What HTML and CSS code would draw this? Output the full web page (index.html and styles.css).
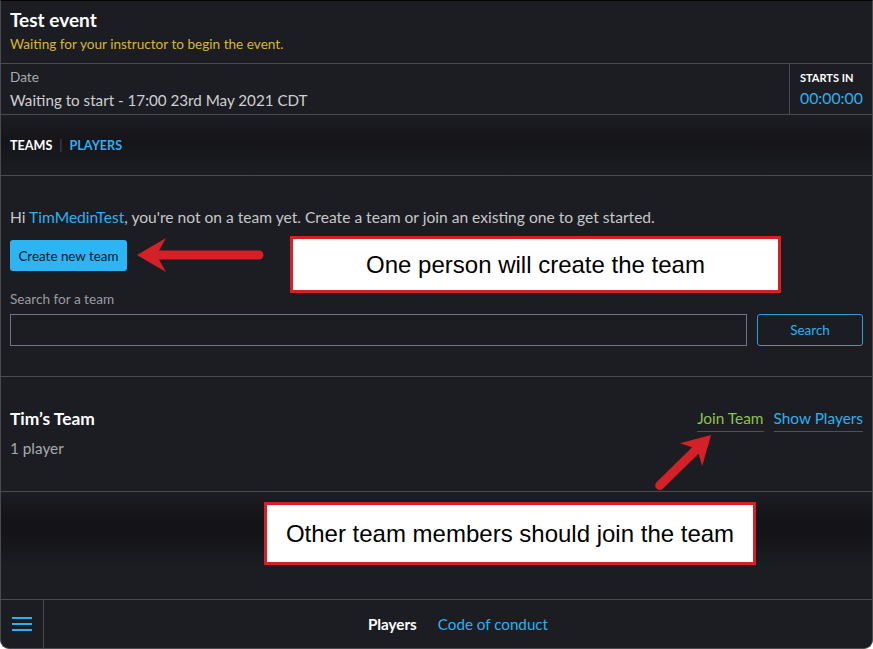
FILE: index.html
```html
<!DOCTYPE html>
<html>
<head>
<meta charset="utf-8">
<link rel="stylesheet" href="styles.css">
</head>
<body>
<div class="app">
  <header class="head">
    <h1 class="title">Test event</h1>
    <p class="status">Waiting for your instructor to begin the event.</p>
  </header>
  <section class="daterow">
    <div class="datecell">
      <div class="label">Date</div>
      <div class="dateval">Waiting to start - 17:00 23rd May 2021 CDT</div>
    </div>
    <div class="startcell">
      <div class="startlabel">STARTS IN</div>
      <div class="timer">00:00:00</div>
    </div>
  </section>
  <nav class="tabs">
    <span class="tab active">TEAMS</span>
    <span class="sep">|</span>
    <span class="tab link">PLAYERS</span>
  </nav>
  <section class="intro">
    <p class="hi">Hi <span class="blue">TimMedinTest</span>, you're not on a team yet. Create a team or join an existing one to get started.</p>
    <button class="create">Create new team</button>
    <label class="label search-label">Search for a team</label>
    <div class="search-row">
      <input class="search-input" type="text">
      <button class="search-btn">Search</button>
    </div>
  </section>
  <section class="team">
    <div class="team-info">
      <div class="team-name">Tim’s Team</div>
      <div class="team-count">1 player</div>
    </div>
    <div class="team-actions">
      <span class="action join">Join Team</span>
      <span class="action show">Show Players</span>
    </div>
  </section>
  <section class="filler"></section>
  <footer class="foot">
    <div class="menu">
      <svg width="20" height="16" viewBox="0 0 20 16"><rect x="0" y="1" width="20" height="2" fill="#2fb0ee"/><rect x="0" y="7" width="20" height="2" fill="#2fb0ee"/><rect x="0" y="13" width="20" height="2" fill="#2fb0ee"/></svg>
    </div>
    <div class="foot-nav">
      <span class="foot-cur">Players</span>
      <span class="foot-link">Code of conduct</span>
    </div>
  </footer>

  <div class="callout callout1">One person will create the team</div>
  <div class="callout callout2">Other team members should join the team</div>
  <svg class="arrows" width="873" height="649" viewBox="0 0 873 649">
    <g fill="#d42027">
      <path d="M137 255 L166 238 L159 250.5 L259 250.5 A4.5 4.5 0 0 1 259 259.5 L159 259.5 L166 272 Z"/>
      <g transform="translate(711 435) rotate(135.5)">
        <path d="M0 0 L28 -16 L22 -4.5 L72 -4.5 A4.5 4.5 0 0 1 72 4.5 L22 4.5 L28 16 Z"/>
      </g>
    </g>
  </svg>
</div>
</body>
</html>
```

FILE: styles.css
```css
html, body {
  margin: 0;
  padding: 0;
  background: #ffffff;
}
body {
  width: 873px;
  height: 649px;
  overflow: hidden;
  font-family: Lato, "Open Sans", sans-serif;
}
.app {
  position: relative;
  box-sizing: border-box;
  width: 873px;
  height: 649px;
  background: #1c1d22;
  border: 1px solid #4a4b51;
  border-top-color: #050505;
  border-radius: 0 0 9px 9px;
  display: flex;
  flex-direction: column;
  overflow: hidden;
  color: #d2d3d6;
}
.head {
  height: 63px;
  box-sizing: border-box;
  padding: 7px 9px 0;
  border-bottom: 1px solid #494a50;
}
.title {
  margin: 0;
  font-size: 19px;
  line-height: 24px;
  font-weight: 700;
  color: #ffffff;
}
.status {
  margin: 4px 0 0;
  font-size: 13.6px;
  line-height: 17px;
  color: #d8b532;
}
.daterow {
  display: flex;
  height: 51px;
  box-sizing: border-box;
  border-bottom: 1px solid #494a50;
}
.datecell {
  flex: 1;
  padding: 5px 9px 0;
}
.label {
  display: block;
  font-size: 13.6px;
  line-height: 17px;
  color: #a9aab0;
}
.dateval {
  margin-top: 5px;
  font-size: 15.2px;
  line-height: 19px;
  color: #cfd0d3;
}
.startcell {
  width: 83px;
  border-left: 1px solid #494a50;
  padding: 7px 0 0 10px;
  box-sizing: border-box;
}
.startlabel {
  font-size: 11px;
  line-height: 14px;
  font-weight: 700;
  color: #ffffff;
}
.timer {
  margin-top: 3px;
  font-size: 15.8px;
  line-height: 19px;
  color: #2fb0ee;
}
.tabs {
  height: 61px;
  box-sizing: border-box;
  border-bottom: 1px solid #494a50;
  display: flex;
  align-items: center;
  gap: 7px;
  padding: 1px 9px 0;
  background: linear-gradient(to bottom, #1c1d22 0%, #151519 45%, #18191d 70%, #1c1d22 100%);
  font-size: 12.6px;
  font-weight: 700;
}
.tab.active { color: #ffffff; }
.tab.link { color: #2fb0ee; }
.sep { color: #4b4c52; font-weight: 400; }
.intro {
  height: 201px;
  box-sizing: border-box;
  border-bottom: 1px solid #494a50;
  padding: 32px 9px 0;
  display: flex;
  flex-direction: column;
  align-items: flex-start;
}
.hi {
  margin: 0;
  font-size: 15.6px;
  line-height: 19px;
  color: #c6c7cb;
}
.blue { color: #2fb0ee; }
.create {
  margin-top: 13px;
  width: 117px;
  height: 31px;
  border: none;
  border-radius: 3px;
  background: #2cb4f3;
  color: #0f1a24;
  font-family: inherit;
  font-size: 13.4px;
  padding: 0;
}
.search-label {
  margin-top: 20px;
  color: #9a9ba1;
}
.search-row {
  margin-top: 6px;
  width: 100%;
  display: flex;
  gap: 10px;
}
.search-input {
  flex: 1;
  height: 32px;
  box-sizing: border-box;
  background: transparent;
  border: 1px solid #6e7486;
  border-radius: 0;
  margin: 0;
}
.search-btn {
  width: 106px;
  height: 32px;
  box-sizing: border-box;
  background: transparent;
  border: 1px solid #2a9fdc;
  border-radius: 3px;
  color: #2fb0ee;
  font-family: inherit;
  font-size: 13.5px;
  padding: 0;
}
.team {
  height: 115px;
  box-sizing: border-box;
  border-bottom: 1px solid #494a50;
  display: flex;
  justify-content: space-between;
  align-items: flex-start;
  padding: 31px 9px 0;
}
.team-name {
  font-size: 17.4px;
  line-height: 22px;
  font-weight: 700;
  color: #ffffff;
}
.team-count {
  margin-top: 9px;
  font-size: 15.3px;
  line-height: 19px;
  color: #a9aab0;
}
.team-actions {
  display: flex;
  gap: 10px;
}
.action {
  font-size: 15.4px;
  line-height: 20px;
  padding-bottom: 3px;
  border-bottom: 1px solid #4e5056;
}
.join { color: #8cc152; }
.show { color: #2fb0ee; }
.filler {
  height: 108px;
  box-sizing: border-box;
  border-bottom: 1px solid #494a50;
  background: linear-gradient(to bottom, #1c1d22 0%, #141418 25%, #151519 45%, #1c1d22 70%, #1c1d22 100%);
}
.foot {
  flex: 1;
  display: flex;
}
.menu {
  width: 43px;
  border-right: 1px solid #494a50;
  display: flex;
  align-items: center;
  padding-left: 11px;
  box-sizing: border-box;
}
.foot-nav {
  flex: 1;
  display: flex;
  justify-content: center;
  align-items: center;
  gap: 21px;
  font-size: 15.2px;
}
.foot-cur { color: #ffffff; font-weight: 700; }
.foot-link { color: #2fb0ee; }
.callout {
  position: absolute;
  box-sizing: border-box;
  background: #ffffff;
  border: 3px solid #d42027;
  color: #000000;
  font-family: "Liberation Sans", Arial, sans-serif;
  font-size: 24px;
  display: flex;
  align-items: center;
  justify-content: center;
}
.callout1 {
  left: 289px;
  top: 235px;
  width: 491px;
  height: 57px;
}
.callout2 {
  left: 263px;
  top: 501px;
  width: 492px;
  height: 63px;
}
.arrows {
  position: absolute;
  left: -1px;
  top: -1px;
  pointer-events: none;
}
```
